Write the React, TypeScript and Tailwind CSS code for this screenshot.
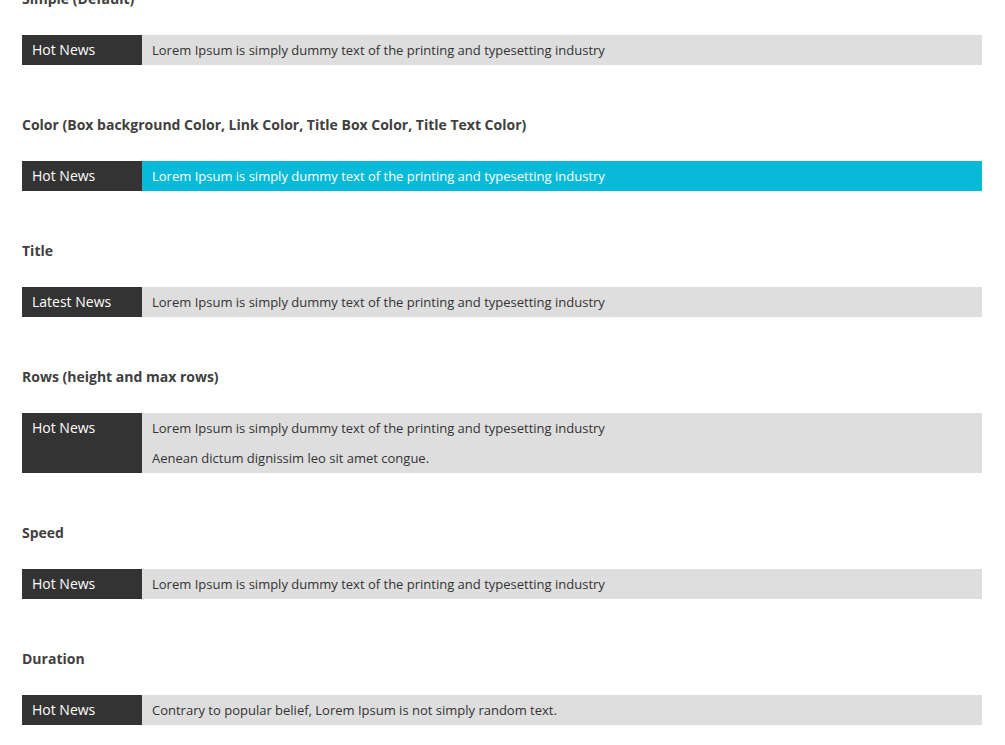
const sections: { title: string; label: string; lines: string[]; color?: boolean }[] = [
  { title: "Simple (Default)", label: "Hot News", lines: ["Lorem Ipsum is simply dummy text of the printing and typesetting industry"] },
  {
    title: "Color (Box background Color, Link Color, Title Box Color, Title Text Color)",
    label: "Hot News",
    lines: ["Lorem Ipsum is simply dummy text of the printing and typesetting industry"],
    color: true,
  },
  { title: "Title", label: "Latest News", lines: ["Lorem Ipsum is simply dummy text of the printing and typesetting industry"] },
  {
    title: "Rows (height and max rows)",
    label: "Hot News",
    lines: ["Lorem Ipsum is simply dummy text of the printing and typesetting industry", "Aenean dictum dignissim leo sit amet congue."],
  },
  { title: "Speed", label: "Hot News", lines: ["Lorem Ipsum is simply dummy text of the printing and typesetting industry"] },
  { title: "Duration", label: "Hot News", lines: ["Contrary to popular belief, Lorem Ipsum is not simply random text."] },
];

export default function App() {
  return (
    <div className="h-[745px] overflow-hidden bg-white pl-[22px] font-['Open_Sans',sans-serif]">
      <div className="-mt-[11px] w-[960px]">
        {sections.map((s) => (
          <section key={s.title} className="mb-[50px]">
            <h3 className="mb-[26px] text-[14px] font-bold leading-[20px] text-[#404040]">{s.title}</h3>
            <div className="flex">
              <div className="w-[120px] shrink-0 bg-[#333333] pl-[10px] text-[14px] leading-[30px] text-white">{s.label}</div>
              <ul className={`flex-1 pl-[10px] text-[13px] leading-[30px] ${s.color ? "bg-[#08bad8] text-white" : "bg-[#dedede] text-[#333333]"}`}>
                {s.lines.map((l) => (
                  <li key={l}>{l}</li>
                ))}
              </ul>
            </div>
          </section>
        ))}
      </div>
    </div>
  );
}
